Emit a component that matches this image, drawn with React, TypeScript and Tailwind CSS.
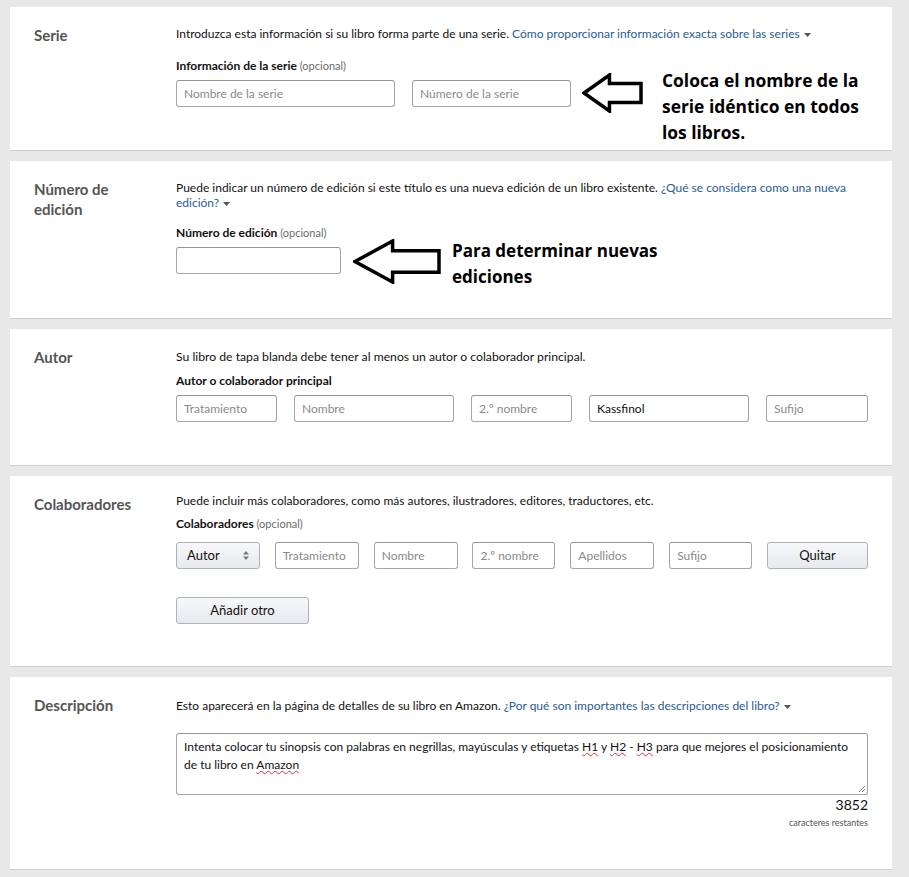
import React from 'react';

const font = "font-['Lato','Open_Sans',sans-serif]";

const Caret = () => (
  <svg className="inline-block ml-1 align-middle" width="7" height="4" viewBox="0 0 7 4">
    <path d="M0 0h7L3.5 4z" fill="#555" />
  </svg>
);

const Arrow = ({ w, h }: { w: number; h: number }) => {
  // left-pointing outlined arrow, like the annotation drawn on the screenshot
  const head = w * 0.45;
  const sTop = h * 0.26;
  const sBot = h * 0.74;
  return (
    <svg width={w} height={h} viewBox={`0 0 ${w} ${h}`}>
      <path
        d={`M2 ${h / 2} L${head} 2 L${head} ${sTop} L${w - 2} ${sTop} L${w - 2} ${sBot} L${head} ${sBot} L${head} ${h - 2} Z`}
        fill="none"
        stroke="#000"
        strokeWidth="3.5"
        strokeLinejoin="miter"
      />
    </svg>
  );
};

const Input = ({ w, placeholder, value }: { w: string; placeholder?: string; value?: string }) => (
  <div
    className={`${w} h-[27px] shrink-0 rounded-[3px] border border-[#a6a6a6] border-t-[#949494] bg-white px-[7px] flex items-center text-[12px] ${
      value ? 'text-[#111]' : 'text-[#8a8a8a]'
    }`}
  >
    {value ?? placeholder}
  </div>
);

const Btn = ({ w, children, className = '' }: { w: string; children: React.ReactNode; className?: string }) => (
  <div
    className={`${w} h-[27px] shrink-0 rounded-[3px] border border-[#adb1b8] bg-gradient-to-b from-[#f7f8fa] to-[#e7e9ec] flex items-center text-[13px] text-[#111] ${className}`}
  >
    {children}
  </div>
);

const Panel = ({ title, h, children }: { title: React.ReactNode; h: string; children: React.ReactNode }) => (
  <div className={`relative bg-white border-b border-[#d0d0d0] ${h} flex pl-[24px] pr-[24px] pt-[18px]`}>
    <div className="w-[142px] shrink-0 text-[15px] font-bold text-[#555] leading-[20px]">{title}</div>
    <div className="flex-1">{children}</div>
  </div>
);

const Sub = ({ bold, opt }: { bold: string; opt?: boolean }) => (
  <div className="text-[12px] leading-[16px] text-[#111]">
    <span className="font-bold">{bold}</span>
    {opt && <span className="text-[11px] text-[#6b6b6b]"> (opcional)</span>}
  </div>
);

const Squiggle = ({ children }: { children: React.ReactNode }) => (
  <span className="underline decoration-wavy decoration-[#d33] decoration-[1px]">{children}</span>
);

export default function App() {
  return (
    <div className={`${font} bg-[#e8e8e8] w-[909px] h-[877px] pt-[7px] pl-[10px] pr-[17px] flex flex-col gap-[10px]`}>
      <Panel title="Serie" h="h-[144px]">
        <p className="text-[12px] leading-[16px] text-[#111] pt-[1px]">
          Introduzca esta información si su libro forma parte de una serie.{' '}
          <span className="text-[#1f5c99]">Cómo proporcionar información exacta sobre las series</span>
          <Caret />
        </p>
        <div className="mt-[16px]">
          <Sub bold="Información de la serie" opt />
        </div>
        <div className="mt-[6px] flex gap-[17px]">
          <Input w="w-[219px]" placeholder="Nombre de la serie" />
          <Input w="w-[159px]" placeholder="Número de la serie" />
        </div>
        <div className="absolute left-[572px] top-[66px]">
          <Arrow w={61} h={40} />
        </div>
        <div className="absolute left-[652px] top-[60px] font-['Open_Sans',sans-serif] font-bold text-[17.4px] leading-[26px] text-black">
          Coloca el nombre de la
          <br />
          serie idéntico en todos
          <br />
          los libros.
        </div>
      </Panel>

      <Panel
        title={
          <>
            Número de
            <br />
            edición
          </>
        }
        h="h-[158px]"
      >
        <p className="text-[12px] leading-[15px] text-[#111] pt-[1px]">
          Puede indicar un número de edición si este título es una nueva edición de un libro existente.{' '}
          <span className="text-[#1f5c99]">¿Qué se considera como una nueva edición?</span>
          <Caret />
        </p>
        <div className="mt-[15px]">
          <Sub bold="Número de edición" opt />
        </div>
        <div className="mt-[6px] flex">
          <Input w="w-[165px]" />
        </div>
        <div className="absolute left-[343px] top-[78px]">
          <Arrow w={88} h={45} />
        </div>
        <div className="absolute left-[442px] top-[77px] font-['Open_Sans',sans-serif] font-bold text-[17px] leading-[26px] text-black">
          Para determinar nuevas
          <br />
          ediciones
        </div>
      </Panel>

      <Panel title="Autor" h="h-[137px]">
        <p className="text-[12.2px] leading-[16px] text-[#111] pt-[2px]">
          Su libro de tapa blanda debe tener al menos un autor o colaborador principal.
        </p>
        <div className="mt-[8px]">
          <Sub bold="Autor o colaborador principal" />
        </div>
        <div className="mt-[6px] flex justify-between">
          <Input w="w-[101px]" placeholder="Tratamiento" />
          <Input w="w-[160px]" placeholder="Nombre" />
          <Input w="w-[101px]" placeholder="2.º nombre" />
          <Input w="w-[160px]" value="Kassfinol" />
          <Input w="w-[102px]" placeholder="Sufijo" />
        </div>
      </Panel>

      <Panel title="Colaboradores" h="h-[191px]">
        <p className="text-[12px] leading-[16px] text-[#111] -mt-[1px]">
          Puede incluir más colaboradores, como más autores, ilustradores, editores, traductores, etc.
        </p>
        <div className="mt-[7px]">
          <Sub bold="Colaboradores" opt />
        </div>
        <div className="mt-[10px] flex justify-between">
          <Btn w="w-[84px]" className="px-[10px] justify-between">
            <span>Autor</span>
            <svg width="6" height="9" viewBox="0 0 6 9">
              <path d="M0 3.5L3 0l3 3.5zM0 5.5L3 9l3-3.5z" fill="#777" />
            </svg>
          </Btn>
          <Input w="w-[84px]" placeholder="Tratamiento" />
          <Input w="w-[84px]" placeholder="Nombre" />
          <Input w="w-[83px]" placeholder="2.º nombre" />
          <Input w="w-[84px]" placeholder="Apellidos" />
          <Input w="w-[83px]" placeholder="Sufijo" />
          <Btn w="w-[101px]" className="justify-center">
            Quitar
          </Btn>
        </div>
        <div className="mt-[28px] flex">
          <Btn w="w-[133px]" className="justify-center">
            Añadir otro
          </Btn>
        </div>
      </Panel>

      <Panel title="Descripción" h="h-[193px]">
        <p className="text-[12px] leading-[16px] text-[#111] pt-[3px]">
          Esto aparecerá en la página de detalles de su libro en Amazon.{' '}
          <span className="text-[#1f5c99]">¿Por qué son importantes las descripciones del libro?</span>
          <Caret />
        </p>
        <div className="relative mt-[19px] h-[62px] rounded-[3px] border border-[#a6a6a6] border-t-[#949494] px-[7px] pt-[4px] text-[12px] leading-[18px] text-[#111]">
          Intenta colocar tu sinopsis con palabras en negrillas, mayúsculas y etiquetas <Squiggle>H1</Squiggle> y{' '}
          <Squiggle>H2</Squiggle> - <Squiggle>H3</Squiggle> para que mejores el posicionamiento de tu libro en{' '}
          <Squiggle>Amazon</Squiggle>
          <svg className="absolute right-[1px] bottom-[1px]" width="8" height="8" viewBox="0 0 8 8">
            <path d="M7 1L1 7M7 4L4 7" stroke="#888" strokeWidth="1" />
          </svg>
        </div>
        <div className="text-right text-[14px] leading-[18px] text-[#111] mt-[1px]">3852</div>
        <div className="text-right text-[9px] leading-[12px] text-[#555] mt-[3px]">caracteres restantes</div>
      </Panel>
    </div>
  );
}
